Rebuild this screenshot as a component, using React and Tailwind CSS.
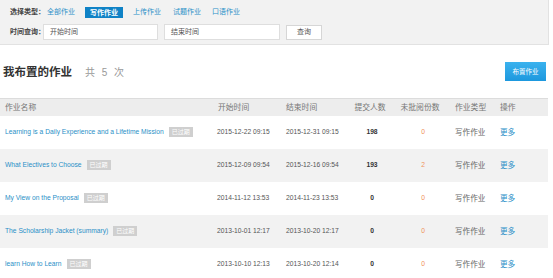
import React from "react";

const rows = [
  { title: "Learning is a Daily Experience and a Lifetime Mission", start: "2015-12-22 09:15", end: "2015-12-31 09:15", count: 198, unread: 0 },
  { title: "What Electives to Choose", start: "2015-12-09 09:54", end: "2015-12-16 09:54", count: 193, unread: 2 },
  { title: "My View on the Proposal", start: "2014-11-12 13:53", end: "2014-11-23 13:53", count: 0, unread: 0 },
  { title: "The Scholarship Jacket (summary)", start: "2013-10-01 12:17", end: "2013-10-20 12:17", count: 0, unread: 0 },
  { title: "learn How to Learn", start: "2013-10-10 12:13", end: "2013-10-20 12:14", count: 0, unread: 0 },
];

const font = { fontFamily: '"Liberation Sans", Arial, "Noto Sans CJK SC", sans-serif' };
const cols = "grid grid-cols-[212px_69px_69px_40px_60px_45px_1fr] items-center";

const App = () => {
  return (
    <div className="w-[553px] h-[278px] bg-white overflow-hidden text-[#555]" style={font}>
      {/* filter panel */}
      <div className="w-[549px] h-[45px] bg-[#f2f2f2] border-b border-r border-[#e2e2e2] pl-[10px] pt-[7px]">
        <div className="flex items-center h-[11px] text-[7px] whitespace-nowrap">
          <span className="text-[#444] font-bold">选择类型：</span>
          <span className="ml-[2px] text-[#2a90c8]">全部作业</span>
          <span className="ml-[10px] bg-[#0f82c6] text-white font-bold px-[5px] h-[11px] leading-[11px]">写作作业</span>
          <span className="ml-[10px] text-[#2a90c8]">上传作业</span>
          <span className="ml-[12px] text-[#2a90c8]">试题作业</span>
          <span className="ml-[11px] text-[#2a90c8]">口语作业</span>
        </div>
        <div className="flex items-center mt-[6px] text-[7px] whitespace-nowrap">
          <span className="text-[#444] font-bold w-[33px]">时间查询：</span>
          <div className="w-[115px] h-[16px] bg-white border border-[#dedede] pl-[6px] flex items-center text-[#555]">开始时间</div>
          <div className="ml-[6px] w-[116px] h-[16px] bg-white border border-[#dedede] pl-[6px] flex items-center text-[#555]">结束时间</div>
          <div className="ml-[6px] w-[36px] h-[15px] bg-white border border-[#d6d6d6] flex items-center justify-center text-[#555]">查询</div>
        </div>
      </div>

      {/* title row */}
      <div className="flex items-center justify-between h-[53px] pl-[3px] pr-[7px]">
        <div className="flex items-baseline mt-[3px]">
          <span className="text-[11.5px] font-bold text-[#333]">我布置的作业</span>
          <span className="ml-[13px] text-[10px] text-[#999] tracking-[2px]">共 5 次</span>
        </div>
        <div className="w-[41px] h-[19px] bg-gradient-to-b from-[#3ab2ee] to-[#1c98de] text-white text-[6.5px] flex items-center justify-center">布置作业</div>
      </div>

      {/* table */}
      <div className="w-[548px]">
        <div className={`${cols} h-[18px] bg-[#ededed] border-t border-[#dcdcdc] text-[7.8px] text-[#777]`}>
          <div className="pl-[5px]">作业名称</div>
          <div className="pl-[6px]">开始时间</div>
          <div className="pl-[5px]">结束时间</div>
          <div className="text-center">提交人数</div>
          <div className="text-center">未批阅份数</div>
          <div className="pl-[5px]">作业类型</div>
          <div className="pl-[5px]">操作</div>
        </div>
        {rows.map((r, i) => (
          <div key={i} className={`${cols} h-[33px] text-[6.7px] ${i % 2 === 1 ? "bg-[#f2f2f2]" : "bg-white"}`}>
            <div className="pl-[5px] flex items-center whitespace-nowrap">
              <span className="text-[#2a8fc7]">{r.title}</span>
              <span className="ml-[5px] bg-[#cfcfcf] text-white text-[6px] px-[3px] h-[10px] leading-[10px]">已过期</span>
            </div>
            <div className="pl-[5px] text-[#555]">{r.start}</div>
            <div className="pl-[5px] text-[#555]">{r.end}</div>
            <div className="text-center font-bold text-[#333] pl-[4px]">{r.count}</div>
            <div className="text-center text-[#f0925a] pl-[6px]">{r.unread}</div>
            <div className="pl-[5px] text-[#666] text-[7.6px]">写作作业</div>
            <div className="pl-[5px] text-[#2a90c8] text-[7.6px]">更多</div>
          </div>
        ))}
      </div>
    </div>
  );
};

export default App;
